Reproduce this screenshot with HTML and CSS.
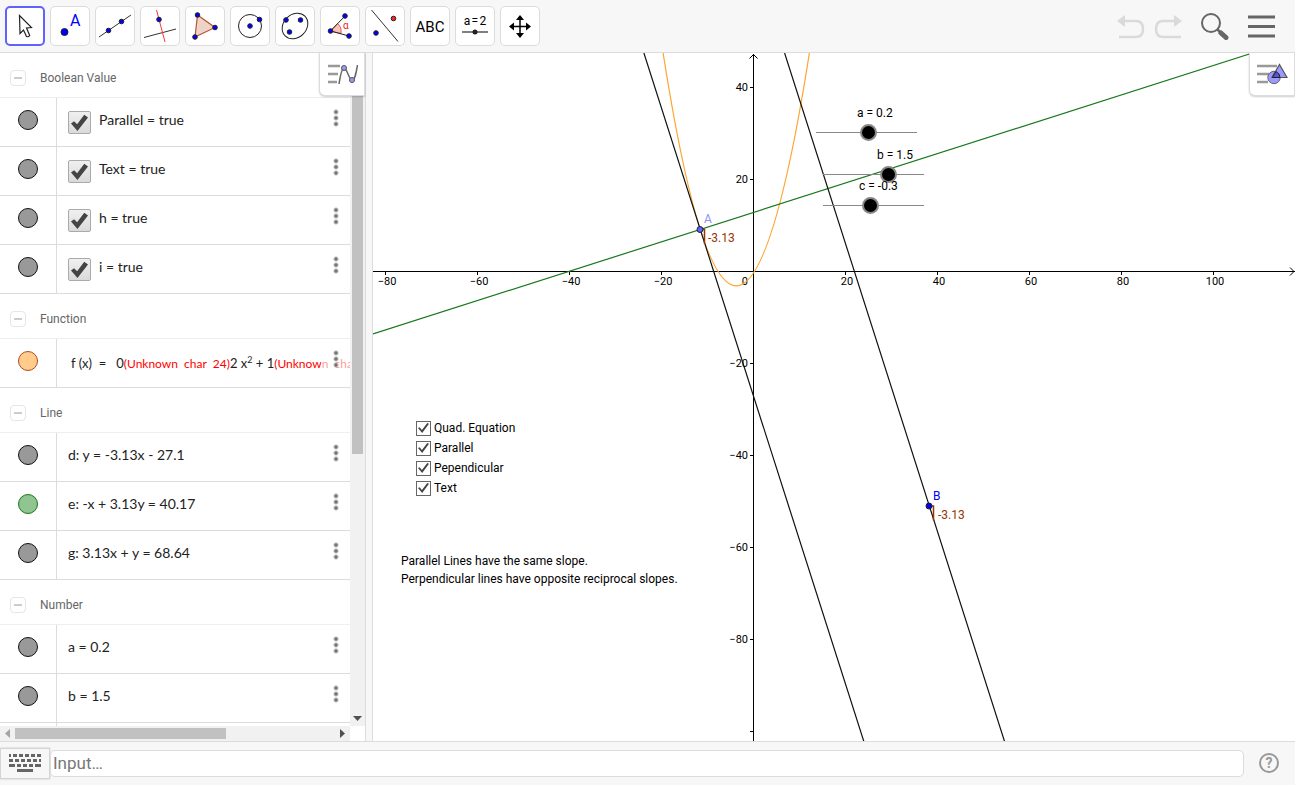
FILE: index.html
```html
<!DOCTYPE html>
<html lang="en">
<head>
  <meta charset="UTF-8">
  <title>Graphing Calculator</title>
  <link rel="stylesheet" href="styles.css">
</head>
<body>

  <header class="toolbar">
    <div class="tools">
      <button class="tool selected" aria-label="Move">
        <svg width="40" height="40"><path d="M14.500 9.500L15 27.500l3.500-3.500 3 6.500q2 .8 3.200-1L21.500 22l5-.5z" fill="#fff" stroke="#222" stroke-width="1.200"/></svg>
      </button>
      <button class="tool" aria-label="Point">
        <svg width="40" height="40"><circle class="pt" cx="14.500" cy="26" r="3.500"/><text x="20" y="20" class="letter">A</text></svg>
      </button>
      <button class="tool" aria-label="Line">
        <svg width="40" height="40"><path d="M4 31L36 9" stroke="#333"/><circle class="pt" cx="13.500" cy="24.500" r="2.300"/><circle class="pt" cx="26.500" cy="15.500" r="2.300"/></svg>
      </button>
      <button class="tool" aria-label="Perpendicular line">
        <svg width="40" height="40"><path d="M4 31.500L36 23" stroke="#333"/><path d="M16.500 4l8.500 32" stroke="#f33"/><circle class="pt" cx="19" cy="13.500" r="2.300"/></svg>
      </button>
      <button class="tool" aria-label="Polygon">
        <svg width="40" height="40"><path d="M12.500 9L30 21.500 10 31z" fill="#efd3c8" stroke="#b5562f" stroke-width="1.200"/><circle class="pt" cx="12.500" cy="9" r="2.300"/><circle class="pt" cx="30" cy="21.500" r="2.300"/><circle class="pt" cx="10" cy="31" r="2.300"/></svg>
      </button>
      <button class="tool" aria-label="Circle">
        <svg width="40" height="40"><circle cx="20" cy="20" r="11.500" fill="none" stroke="#222"/><circle class="pt" cx="20" cy="20" r="2.300"/><circle class="pt" cx="29.500" cy="13.500" r="2.300"/></svg>
      </button>
      <button class="tool" aria-label="Ellipse">
        <svg width="40" height="40"><ellipse cx="20" cy="20" rx="14" ry="11.500" transform="rotate(-45 20 20)" fill="none" stroke="#222"/><circle class="pt" cx="11" cy="14" r="2.300"/><circle class="pt" cx="25.500" cy="14" r="2.300"/><circle class="pt" cx="14.500" cy="26" r="2.300"/></svg>
      </button>
      <button class="tool" aria-label="Angle">
        <svg width="40" height="40"><path d="M10.500 25l7-7.500q4.500 3.500 3.500 10z" fill="#f6c4bb" stroke="#e55"/><path d="M25 10L10.500 25 29 30" fill="none" stroke="#222"/><circle class="pt" cx="25" cy="10" r="2.300"/><circle class="pt" cx="10.500" cy="25" r="2.300"/><circle class="pt" cx="29" cy="30" r="2.300"/><text x="23" y="23" class="alpha">α</text></svg>
      </button>
      <button class="tool" aria-label="Reflect">
        <svg width="40" height="40"><path d="M6.500 4L33 35.500" stroke="#333"/><circle class="pt" cx="11" cy="27" r="2.300"/><circle cx="28.500" cy="12.500" r="2.300" fill="#f22" stroke="#222"/></svg>
      </button>
      <button class="tool" aria-label="Text">
        <svg width="40" height="40"><text x="20" y="26" text-anchor="middle" class="abc">ABC</text></svg>
      </button>
      <button class="tool" aria-label="Slider">
        <svg width="40" height="40"><text x="20" y="19" text-anchor="middle" class="param">a&#8202;=&#8202;2</text><path d="M7 26h26" stroke="#555" stroke-width="1.500"/><circle cx="20" cy="26" r="2.500" fill="#222"/></svg>
      </button>
      <button class="tool" aria-label="Move graphics view">
        <svg width="40" height="40"><path d="M12 20.500h16M20 12v16" stroke="#000" stroke-width="1.500"/><path d="M20 9l4 5h-8zM20 32l4-5h-8zM9 20.500l5-4v8zM31 20.500l-5-4v8z"/></svg>
      </button>
    </div>
    <div class="actions">
      <button class="action" aria-label="Undo">
        <svg width="28" height="28"><path d="M8 9h11q7 0 7 8t-7 8H2" fill="none" stroke="#dadada" stroke-width="2.500"/><path d="M0 9l8-6v12z" fill="#dadada"/></svg>
      </button>
      <button class="action" aria-label="Redo">
        <svg width="28" height="28"><path d="M20 9H9Q2 9 2 17t7 8h18" fill="none" stroke="#dadada" stroke-width="2.500"/><path d="M28 9l-8-6v12z" fill="#dadada"/></svg>
      </button>
      <button class="action search" aria-label="Search">
        <svg width="28" height="28"><circle cx="10" cy="11" r="9" fill="none" stroke="#666" stroke-width="2"/><path d="M16 17l4 4" stroke="#666" stroke-width="2.500"/><path d="M20 21l5 4.500" stroke="#666" stroke-width="5" stroke-linecap="round"/></svg>
      </button>
      <button class="action" aria-label="Menu">
        <svg width="28" height="28"><path d="M0 5h27M0 14.500h27M0 24h27" stroke="#666" stroke-width="3"/></svg>
      </button>
    </div>
  </header>

  <main class="views">
    <section class="algebra" aria-label="Algebra">
      <div class="list">
        <h2><button class="fold" aria-label="Collapse"></button>Boolean Value</h2>
        <div class="row">
          <span class="marble"><i></i></span>
          <label class="value"><input type="checkbox" checked>Parallel = true</label>
          <button class="more" aria-label="More"></button>
        </div>
        <div class="row">
          <span class="marble"><i></i></span>
          <label class="value"><input type="checkbox" checked>Text = true</label>
          <button class="more" aria-label="More"></button>
        </div>
        <div class="row">
          <span class="marble"><i></i></span>
          <label class="value"><input type="checkbox" checked>h = true</label>
          <button class="more" aria-label="More"></button>
        </div>
        <div class="row">
          <span class="marble"><i></i></span>
          <label class="value"><input type="checkbox" checked>i = true</label>
          <button class="more" aria-label="More"></button>
        </div>

        <h2><button class="fold" aria-label="Collapse"></button>Function</h2>
        <div class="row">
          <span class="marble orange"><i></i></span>
          <div class="value formula">f (x)&nbsp; =&nbsp;&nbsp; 0<em>(Unknown&nbsp; char&nbsp; 24)</em>2 x<sup>2</sup> + 1<em>(Unknown&nbsp; char&nbsp; 24)</em></div>
          <button class="more" aria-label="More"></button>
        </div>

        <h2><button class="fold" aria-label="Collapse"></button>Line</h2>
        <div class="row">
          <span class="marble"><i></i></span>
          <div class="value">d: y = -3.13x - 27.1</div>
          <button class="more" aria-label="More"></button>
        </div>
        <div class="row">
          <span class="marble green"><i></i></span>
          <div class="value">e: -x + 3.13y = 40.17</div>
          <button class="more" aria-label="More"></button>
        </div>
        <div class="row">
          <span class="marble"><i></i></span>
          <div class="value">g: 3.13x + y = 68.64</div>
          <button class="more" aria-label="More"></button>
        </div>

        <h2><button class="fold" aria-label="Collapse"></button>Number</h2>
        <div class="row">
          <span class="marble"><i></i></span>
          <div class="value">a = 0.2</div>
          <button class="more" aria-label="More"></button>
        </div>
        <div class="row">
          <span class="marble"><i></i></span>
          <div class="value">b = 1.5</div>
          <button class="more" aria-label="More"></button>
        </div>
        <div class="row">
          <span class="marble"></span>
          <div class="value"></div>
        </div>
      </div>
      <div class="scroll vertical">
        <span class="arrow"></span>
        <div class="track"><div class="thumb"></div></div>
        <span class="arrow"><svg width="9" height="5"><path d="M0 0h9L4.500 5z" fill="#505050"/></svg></span>
      </div>
      <div class="scroll horizontal">
        <span class="arrow"><svg width="5" height="9"><path d="M5 0v9L0 4.500z" fill="#a3a3a3"/></svg></span>
        <div class="track"><div class="thumb"></div></div>
        <span class="arrow"><svg width="5" height="9"><path d="M0 0v9l5-4.500z" fill="#505050"/></svg></span>
      </div>
      <button class="style-bar" aria-label="Algebra style bar">
        <svg width="32" height="24"><path d="M2 4h12M2 12h10M2 20h9" stroke="#999" stroke-width="2.500"/><path d="M13 22Q15.500 6 18 6C21 6 23 18 26 18 29 18 30 12 31.500 3" fill="none" stroke="#666" stroke-width="1.500"/><circle cx="18" cy="6" r="2.500" fill="#99f" stroke="#555"/><circle cx="26" cy="18" r="2.500" fill="#99f" stroke="#555"/></svg>
      </button>
    </section>

    <div class="divider"></div>

    <section class="graphics" aria-label="Graphics">
      <svg class="plot">
        <g class="axes">
          <line x1="0" y1="218.500" x2="100%" y2="218.500"/>
          <line x1="380.500" y1="1" x2="380.500" y2="100%"/>
          <path d="M376.500 5.500l4-4 4 4"/>
          <svg x="100%" y="218.500" overflow="visible"><path d="M-5-4l4 4-4 4"/></svg>
          <path d="M12.500 218v4M104.500 218v4M196.500 218v4M288.500 218v4M472.500 218v4M564.500 218v4M656.500 218v4M748.500 218v4M840.500 218v4"/>
          <path d="M377 34.500h4M377 126.500h4M377 310.500h4M377 402.500h4M377 494.500h4M377 586.500h4M377 678.500h4"/>
        </g>
        <g class="ticks" text-anchor="middle">
          <text x="14" y="232">−80</text>
          <text x="106" y="232">−60</text>
          <text x="198" y="232">−40</text>
          <text x="290" y="232">−20</text>
          <text x="474" y="232">20</text>
          <text x="566" y="232">40</text>
          <text x="658" y="232">60</text>
          <text x="750" y="232">80</text>
          <text x="842" y="232">100</text>
        </g>
        <g class="ticks" text-anchor="end">
          <text x="375" y="38">40</text>
          <text x="375" y="130">20</text>
          <text x="375" y="232">0</text>
          <text x="375" y="314">−20</text>
          <text x="375" y="406">−40</text>
          <text x="375" y="498">−60</text>
          <text x="375" y="590">−80</text>
        </g>
        <g fill="none" stroke-width="1.200">
          <path d="M290.100 0Q363.250 465.700 436.400 0" stroke="#ffa42e"/>
          <path d="M0 281L879.600 0" stroke="#17781a"/>
          <path d="M270.900 0L810.200 1688M411.600 0L950.900 1688" stroke="#111"/>
          <path d="M327 176.500h4.500v14.500M556 453h4.500v14.500" stroke="#993300" stroke-width="1.500"/>
        </g>
        <circle cx="327" cy="176.500" r="3" fill="#6161ff" stroke="#222"/>
        <circle cx="556" cy="453" r="3" fill="#00f" stroke="#222"/>
        <g class="labels">
          <text x="331" y="170" fill="#8f8ff5">A</text>
          <text x="335" y="189" fill="#993300">-3.13</text>
          <text x="560" y="447" fill="#00f">B</text>
          <text x="565" y="466" fill="#993300">-3.13</text>
        </g>
      </svg>

      <div class="slider slider-a">
        <label for="a">a = 0.2</label>
        <input type="range" id="a" min="-5" max="5" step="0.1" value="0.2">
      </div>
      <div class="slider slider-b">
        <label for="b">b = 1.5</label>
        <input type="range" id="b" min="-5" max="5" step="0.1" value="1.5">
      </div>
      <div class="slider slider-c">
        <label for="c">c = -0.3</label>
        <input type="range" id="c" min="-5" max="5" step="0.1" value="-0.3">
      </div>

      <div class="options">
        <label><input type="checkbox" checked>Quad. Equation</label>
        <label><input type="checkbox" checked>Parallel</label>
        <label><input type="checkbox" checked>Pependicular</label>
        <label><input type="checkbox" checked>Text</label>
      </div>

      <p class="note">Parallel Lines have the same slope.<br>Perpendicular lines have opposite reciprocal slopes.</p>

      <button class="style-bar" aria-label="Graphics style bar">
        <svg width="32" height="24"><path d="M1 4h20M1 12h12M1 20h11" stroke="#999" stroke-width="2.500"/><circle cx="18" cy="15.500" r="6.200" fill="#99f" stroke="#666"/><path d="M23.500 2.500L31 15.500H16z" fill="#99f" stroke="#555" stroke-width="1.200"/><path d="M20 9.500q4 2 4 6h-7.500z" fill="#55d" stroke="#222"/></svg>
      </button>
    </section>
  </main>

  <footer class="input-bar">
    <button class="keyboard" aria-label="Keyboard">
      <svg width="32" height="20"><g fill="none" stroke="#666" stroke-width="3"><path d="M0 2.500h32" stroke-dasharray="4 2" stroke-dashoffset="2"/><path d="M0 7.500h32" stroke-dasharray="4 2"/><path d="M0 12.500h32" stroke-dasharray="6 2 4 2 4 2 4 2"/><path d="M8 17.500h16"/></g></svg>
    </button>
    <input type="text" placeholder="Input…" aria-label="Input">
    <button class="help" aria-label="Help">
      <svg width="20" height="20"><circle cx="10" cy="10" r="9" fill="none" stroke="#999" stroke-width="2"/><text x="10" y="15" text-anchor="middle">?</text></svg>
    </button>
  </footer>

</body>
</html>
```
FILE: styles.css
```css
* {
  box-sizing: border-box;
}
body {
  display: flex;
  flex-direction: column;
  height: 100vh;
  margin: 0;
  padding: 0 1px 1px 0;
  overflow: hidden;
  background: #fff;
  color: #000;
  font-family: Roboto, sans-serif;
  font-size: 12px;
}
button {
  padding: 0;
  border: none;
  background: none;
  cursor: pointer;
}
svg {
  display: block;
}

/* toolbar */
.toolbar {
  display: flex;
  justify-content: space-between;
  align-items: center;
  height: 53px;
  padding: 0 19px 0 5px;
  background: #f7f7f7;
  border-bottom: 1px solid #dcdcdc;
}
.tools {
  display: flex;
  gap: 5px;
}
.tool {
  display: flex;
  align-items: center;
  justify-content: center;
  width: 40px;
  height: 40px;
  overflow: hidden;
  background: #fff;
  border: 1px solid #dcdcdc;
  border-radius: 5px;
}
.tool svg {
  flex: none;
}
.tool.selected {
  border: 2px solid #6161ff;
}
.pt {
  fill: #00f;
  stroke: #222;
}
.letter {
  fill: #00f;
  font: 16px Roboto, sans-serif;
}
.alpha {
  fill: #e22;
  font: 10px Roboto, sans-serif;
}
.abc {
  font: 15px Roboto, sans-serif;
}
.param {
  font: 12px Roboto, sans-serif;
}
.actions {
  display: flex;
  align-items: center;
}
.action {
  width: 28px;
  height: 28px;
  margin-left: 9px;
}
.action.search {
  margin: 0 10px 0 19px;
}

/* algebra view */
.views {
  display: flex;
  flex: 1;
  min-height: 0;
}
.algebra {
  position: relative;
  display: grid;
  grid-template-columns: 1fr 15px;
  grid-template-rows: 1fr 15px;
  width: 365px;
}
.list {
  min-width: 0;
  min-height: 0;
  overflow: hidden;
}
h2 {
  display: flex;
  align-items: center;
  height: 45px;
  margin: 0;
  padding: 6px 10px 0;
  gap: 14px;
  border-bottom: 1px solid #eee;
  color: #666;
  font-size: 12px;
  font-weight: normal;
}
.fold {
  display: flex;
  align-items: center;
  justify-content: center;
  width: 16px;
  height: 16px;
  border: 1px solid #e6e6e6;
  border-radius: 4px;
}
.fold::before {
  content: "";
  width: 8px;
  height: 2px;
  background: #ccc;
}
.row {
  position: relative;
  display: flex;
  height: 49px;
  border-bottom: 1px solid #dcdcdc;
}
.marble {
  width: 57px;
  padding: 12px 0 0 18px;
  border-right: 1px solid #dcdcdc;
}
.marble i {
  display: block;
  width: 20px;
  height: 20px;
  background: #999;
  border: 1px solid #111;
  border-radius: 50%;
}
.marble.orange i {
  background: #ffcc8c;
  border-color: #b04a20;
}
.marble.green i {
  background: #90c490;
  border-color: #17781a;
}
.value {
  display: flex;
  align-items: center;
  flex: 1;
  height: 42px;
  padding-left: 11px;
  overflow: hidden;
  color: #222;
  font-family: Lato, sans-serif;
  font-size: 14px;
  white-space: nowrap;
}
.value input {
  appearance: none;
  display: flex;
  align-items: center;
  justify-content: center;
  flex: none;
  width: 23px;
  height: 23px;
  margin: 7px 8px 0 0;
  background: linear-gradient(#f0f0f0, #dadada);
  border: 1px solid #aaa;
  border-radius: 2px;
}
.value input:checked::before {
  content: "";
  width: 17px;
  height: 17px;
  background: #444;
  clip-path: polygon(0 56%, 18% 42%, 36% 60%, 78% 5%, 100% 20%, 38% 100%);
}
.value.formula {
  display: block;
  height: 48px;
  padding-left: 14px;
  font-size: 13px;
  line-height: 49px;
}
.formula em {
  color: #f00;
  font-size: 12px;
  font-style: normal;
}
.formula sup {
  font-size: 9px;
  line-height: 0;
}
.more {
  position: absolute;
  top: 5px;
  right: 0;
  width: 29px;
  height: 30px;
  background: radial-gradient(circle, #757575 1px, transparent 3px) 5px 0 / 20px 6px repeat-y, rgba(255, 255, 255, 0.6);
  clip-path: inset(6px 0);
}
.scroll {
  display: flex;
  background: #f1f1f1;
}
.vertical {
  flex-direction: column;
}
.arrow {
  display: flex;
  align-items: center;
  justify-content: center;
  width: 15px;
  height: 15px;
}
.track {
  flex: 1;
  padding: 0 2px;
}
.thumb {
  height: 60%;
  background: #c1c1c1;
}
.horizontal .track {
  padding: 2px 0;
}
.horizontal .thumb {
  width: 66%;
  height: 11px;
}
.style-bar {
  position: absolute;
  top: 0;
  right: 0;
  display: flex;
  align-items: center;
  justify-content: center;
  width: 46px;
  height: 43px;
  background: #fff;
  border: 1px solid #dcdcdc;
  border-top: none;
  border-radius: 0 0 0 6px;
  box-shadow: 0 1px 2px rgba(0, 0, 0, 0.2);
}
.divider {
  width: 8px;
  background: #f7f7f7;
  border: solid #dcdcdc;
  border-width: 0 1px;
}

/* graphics view */
.graphics {
  position: relative;
  flex: 1;
  min-width: 0;
  overflow: hidden;
}
.plot {
  width: 100%;
  height: 100%;
}
.axes {
  fill: none;
  stroke: #000;
}
.ticks {
  font-size: 11px;
}
.labels {
  font-size: 12px;
}
.slider {
  position: absolute;
}
.slider label {
  position: absolute;
  white-space: nowrap;
  line-height: 14px;
}
.slider input {
  appearance: none;
  display: block;
  width: 119px;
  height: 17px;
  margin: 0;
  background: linear-gradient(#888, #888) center / 101px 1px no-repeat;
}
.slider input::-webkit-slider-thumb {
  appearance: none;
  width: 17px;
  height: 17px;
  background: #000;
  border: 2px solid #888;
  border-radius: 50%;
}
.slider-a {
  left: 434px;
  top: 71px;
}
.slider-a label {
  left: 50px;
  top: -18px;
}
.slider-b {
  left: 441px;
  top: 113px;
}
.slider-b label {
  left: 63px;
  top: -18px;
}
.slider-c {
  left: 441px;
  top: 144px;
}
.slider-c label {
  left: 45px;
  top: -18px;
}
.options {
  position: absolute;
  left: 43px;
  top: 365px;
}
.options label {
  display: flex;
  align-items: center;
  gap: 3px;
  height: 20px;
}
.options input {
  appearance: none;
  display: flex;
  align-items: center;
  justify-content: center;
  width: 15px;
  height: 15px;
  margin: 0;
  border: 1px solid #666;
}
.options input:checked::before {
  content: "";
  width: 11px;
  height: 10px;
  background: #444;
  clip-path: polygon(0 50%, 14% 42%, 36% 70%, 84% 0, 100% 8%, 38% 100%);
}
.note {
  position: absolute;
  left: 28px;
  top: 499px;
  margin: 0;
  line-height: 18px;
  white-space: nowrap;
}

/* input bar */
.input-bar {
  display: flex;
  align-items: center;
  height: 44px;
  padding-bottom: 1px;
  background: #f7f7f7;
  border-top: 1px solid #dcdcdc;
}
.keyboard {
  display: flex;
  align-items: center;
  justify-content: center;
  width: 50px;
  height: 31px;
  border: 1px solid #d4d4d4;
  box-shadow: 0 0 2px rgba(0, 0, 0, 0.2);
}
.input-bar input {
  flex: 1;
  min-width: 0;
  height: 27px;
  padding: 0 2px;
  border: 1px solid #dcdcdc;
  border-radius: 5px;
  font-family: Roboto, sans-serif;
  font-size: 17px;
}
.input-bar input::placeholder {
  color: #777;
}
.help {
  margin: 0 16px 0 15px;
}
.help text {
  fill: #999;
  font: bold 14px Roboto, sans-serif;
}
```
